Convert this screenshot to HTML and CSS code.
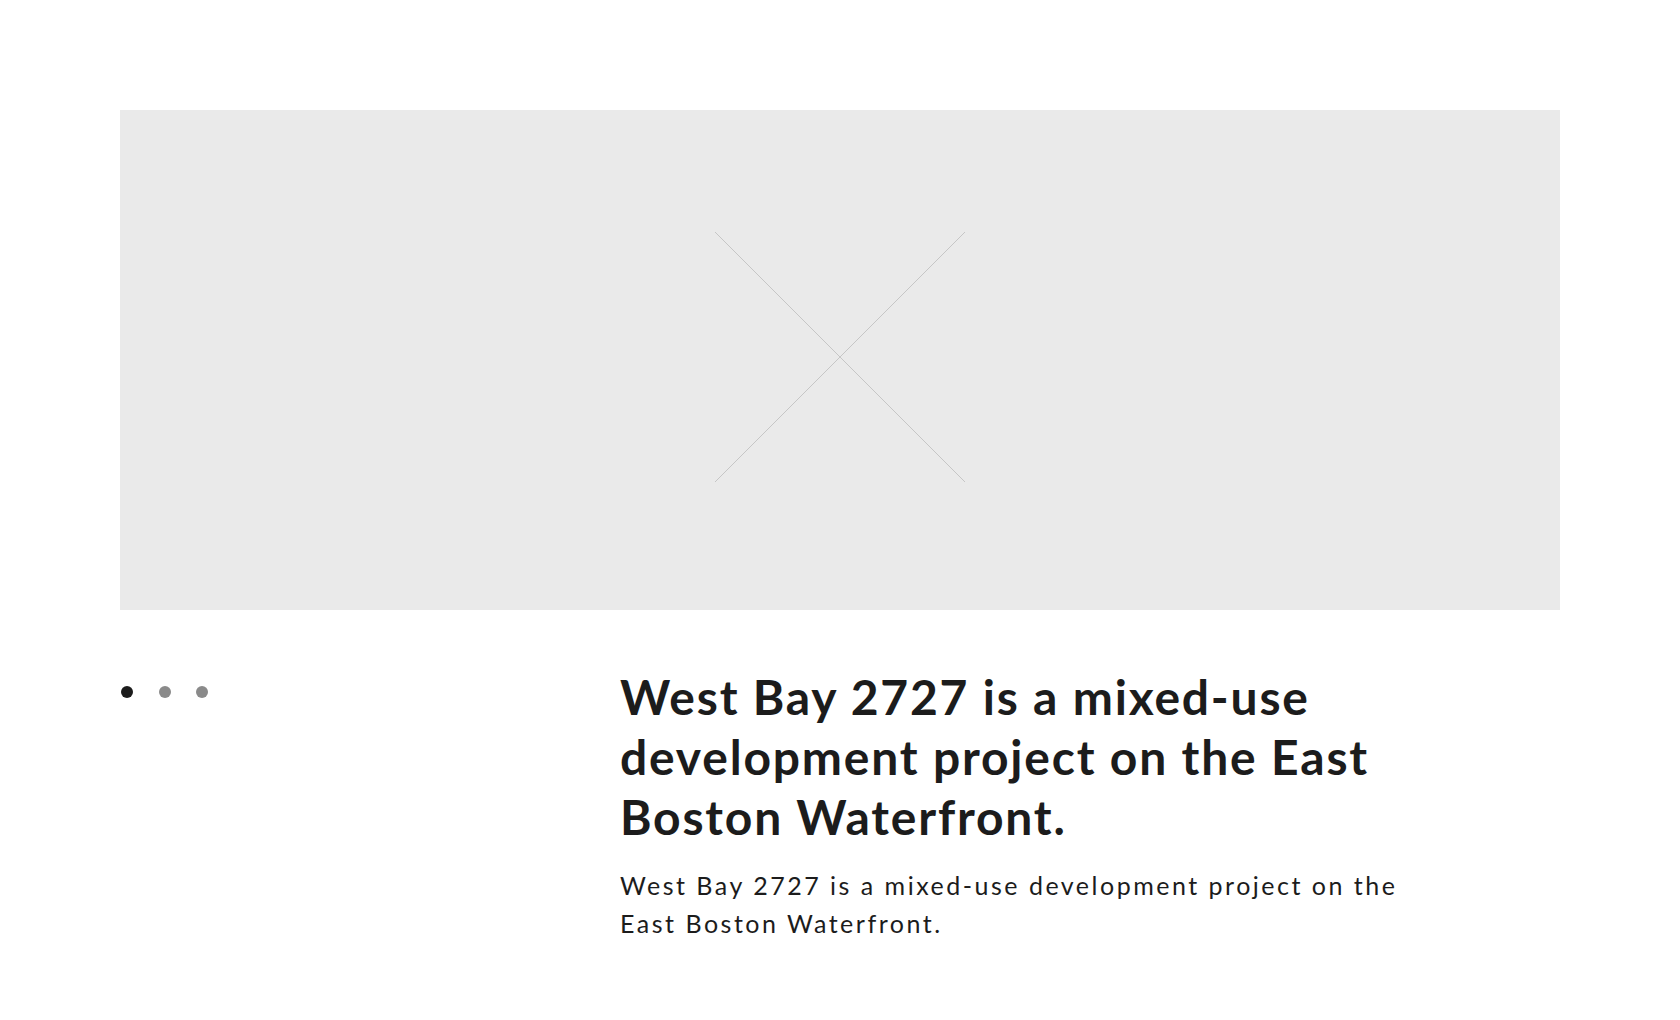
FILE: index.html
```html
<!DOCTYPE html>
<html lang="en">
<head>
<meta charset="utf-8">
<title>West Bay 2727</title>
<link rel="stylesheet" href="styles.css">
</head>
<body>
<main class="page">
  <div class="hero">
    <svg class="placeholder" width="250" height="250" viewBox="0 0 250 250" aria-hidden="true">
      <line x1="0" y1="0" x2="250" y2="250" stroke="#c6c6c6" stroke-width="1"/>
      <line x1="250" y1="0" x2="0" y2="250" stroke="#c6c6c6" stroke-width="1"/>
    </svg>
  </div>
  <section class="info">
    <div class="dots">
      <span class="dot active"></span>
      <span class="dot"></span>
      <span class="dot"></span>
    </div>
    <div class="copy">
      <h1 class="title">West Bay 2727 is a mixed-use development project on the East Boston Waterfront.</h1>
      <p class="lead">West Bay 2727 is a mixed-use development project on the East Boston Waterfront.</p>
    </div>
  </section>
</main>
</body>
</html>
```

FILE: styles.css
```css
html, body {
  margin: 0;
  padding: 0;
  background: #ffffff;
}

body {
  font-family: "Lato", "Noto Sans", sans-serif;
  color: #1c1c1c;
}

.page {
  padding: 110px 120px 0 120px;
}

.hero {
  height: 500px;
  background: #eaeaea;
  display: flex;
  justify-content: center;
  align-items: flex-start;
  padding-top: 122px;
  box-sizing: border-box;
}

.placeholder {
  display: block;
}

.info {
  display: grid;
  grid-template-columns: 500px 1fr;
  margin-top: 57px;
}

.dots {
  display: flex;
  gap: 25.5px;
  padding-top: 19px;
  padding-left: 1px;
}

.dot {
  width: 12px;
  height: 12px;
  border-radius: 50%;
  background: #8a8a8a;
}

.dot.active {
  background: #1c1c1c;
}

.copy {
  max-width: 820px;
}

.title {
  margin: 0;
  font-size: 48px;
  line-height: 60px;
  font-weight: 700;
  letter-spacing: 1.8px;
}

.lead {
  margin: 19px 0 0 0;
  font-size: 25px;
  line-height: 38px;
  font-weight: 400;
  letter-spacing: 2.5px;
}
```
